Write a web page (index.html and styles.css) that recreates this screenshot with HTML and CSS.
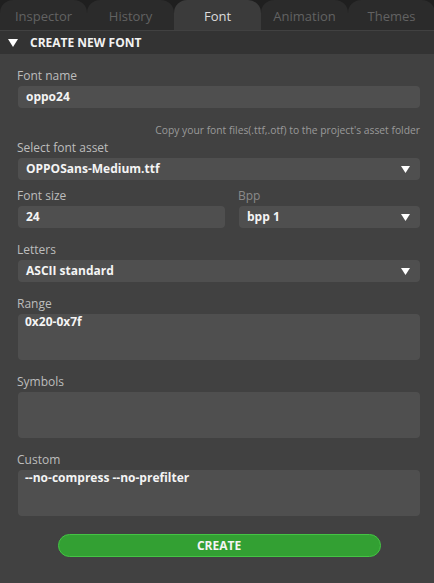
FILE: index.html
```html
<!DOCTYPE html>
<html>
<head>
<meta charset="utf-8">
<link rel="stylesheet" href="styles.css">
</head>
<body>
<div class="tabbar">
  <div class="tab">Inspector</div>
  <div class="tab">History</div>
  <div class="tab active">Font</div>
  <div class="tab">Animation</div>
  <div class="tab">Themes</div>
</div>
<div class="header">
  <svg class="caret" width="10" height="8" viewBox="0 0 10 8"><path d="M0 0H10L5 8Z" fill="#fff"/></svg>
  <span>CREATE NEW FONT</span>
</div>
<div class="content">
  <div class="field">
    <div class="label">Font name</div>
    <div class="input">oppo24</div>
  </div>
  <div class="hint">Copy your font files(.ttf,.otf) to the project's asset folder</div>
  <div class="field tight">
    <div class="label">Select font asset</div>
    <div class="input select">OPPOSans-Medium.ttf<svg class="arrow" width="9" height="7" viewBox="0 0 9 7"><path d="M0 0H9L4.5 7Z" fill="#fff"/></svg></div>
  </div>
  <div class="row">
    <div class="field">
      <div class="label">Font size</div>
      <div class="input">24</div>
    </div>
    <div class="field">
      <div class="label dim">Bpp</div>
      <div class="input select">bpp 1<svg class="arrow" width="9" height="7" viewBox="0 0 9 7"><path d="M0 0H9L4.5 7Z" fill="#fff"/></svg></div>
    </div>
  </div>
  <div class="field">
    <div class="label">Letters</div>
    <div class="input select">ASCII standard<svg class="arrow" width="9" height="7" viewBox="0 0 9 7"><path d="M0 0H9L4.5 7Z" fill="#fff"/></svg></div>
  </div>
  <div class="field">
    <div class="label">Range</div>
    <div class="input area">0x20-0x7f</div>
  </div>
  <div class="field">
    <div class="label">Symbols</div>
    <div class="input area"></div>
  </div>
  <div class="field">
    <div class="label">Custom</div>
    <div class="input area">--no-compress --no-prefilter</div>
  </div>
  <div class="btnrow">
    <div class="button">CREATE</div>
  </div>
</div>
</body>
</html>
```
FILE: styles.css
```css
* { box-sizing: border-box; }
html, body {
  margin: 0;
  padding: 0;
  background: #414141;
  font-family: "Open Sans", "Noto Sans", sans-serif;
  width: 434px;
  height: 583px;
  overflow: hidden;
}
.tabbar {
  display: flex;
  height: 30px;
  background: #1f1f1f;
  padding-left: 0;
}
.tab {
  width: 87px;
  flex: none;
  height: 30px;
  border-radius: 13px 13px 0 0;
  background: #2b2b2b;
  color: #626262;
  font-size: 13px;
  display: flex;
  align-items: center;
  justify-content: center;
  padding-top: 1px;
}
.tab.active {
  background: #3b3b3b;
  color: #ddd;
}
.header {
  margin-top: 1px;
  height: 23px;
  background: #333333;
  display: flex;
  align-items: center;
  color: #f2f2f2;
  font-weight: 700;
  font-size: 12px;
}
.caret { margin-left: 8px; margin-right: 12px; }
.content {
  padding: 14px 14px 0 17px;
  display: flex;
  flex-direction: column;
  gap: 14px;
}
.field { display: flex; flex-direction: column; gap: 2px; }
.label {
  font-size: 12px;
  line-height: 16px;
  color: #bdbdbd;
}
.label.dim { color: #8a8a8a; }
.input {
  margin-left: 1px;
  height: 22px;
  background: #4f4f4f;
  border-radius: 4px;
  color: #f4f4f4;
  font-weight: 700;
  font-size: 12px;
  line-height: 22px;
  padding-left: 8px;
  display: flex;
  align-items: center;
  position: relative;
}
.arrow { position: absolute; right: 10px; top: 8px; }
.input.area {
  height: 46px;
  align-items: flex-start;
  line-height: 16px;
  padding-top: 0;
  padding-left: 7px;
}
.hint {
  margin-top: 1px;
  font-size: 10.3px;
  line-height: 14px;
  color: #9a9a9a;
  text-align: right;
}
.field.tight { margin-top: -11px; }
.row { display: grid; grid-template-columns: 208px 1fr; gap: 13px; margin-top: -6px; }
.btnrow { display: flex; justify-content: center; margin-top: 4px; padding-left: 1px; }
.button {
  width: 323px;
  height: 23px;
  border-radius: 12px;
  background: #33a033;
  border: 1px solid #44c444;
  color: #f4f4f4;
  font-weight: 700;
  font-size: 12px;
  display: flex;
  align-items: center;
  justify-content: center;
}
```
